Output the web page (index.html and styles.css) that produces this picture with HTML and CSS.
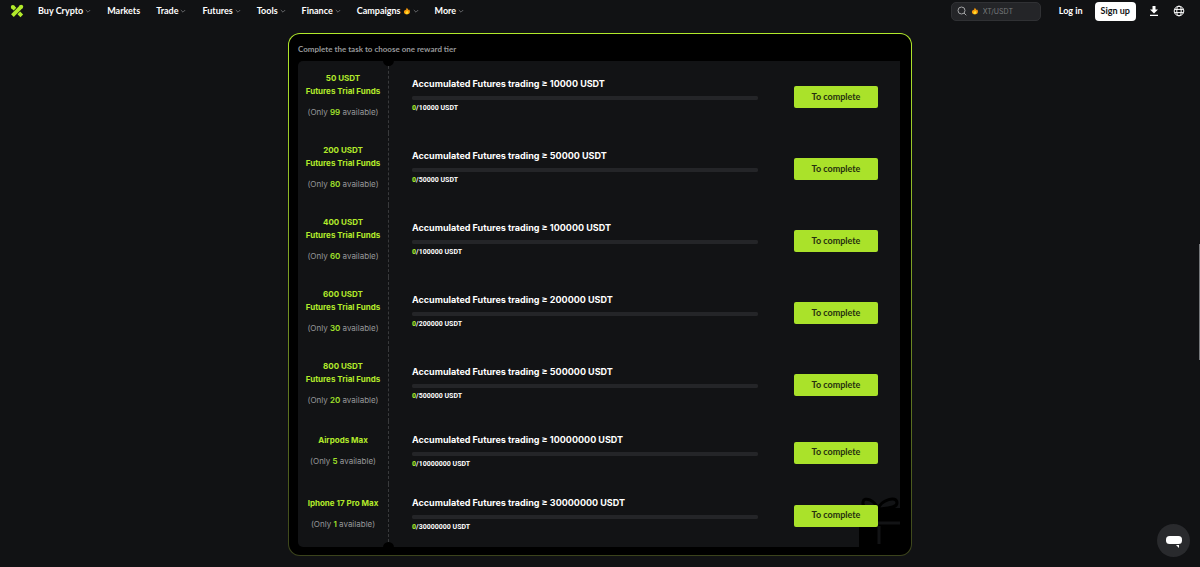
FILE: index.html
```
<!DOCTYPE html>
<html lang="en">
<head>
  <meta charset="UTF-8">
  <meta name="viewport" content="width=device-width, initial-scale=1.0">
  <title>Futures reward tiers</title>
  <link rel="stylesheet" href="styles.css">
</head>
<body>
  <svg width="0" height="0" class="sprite" aria-hidden="true">
    <symbol id="chevron" viewBox="0 0 6 6">
      <path d="M.8 2L3 4.200 5.200 2" fill="none" stroke="currentColor" stroke-width="0.8"/>
    </symbol>
    <symbol id="flame" viewBox="0 0 8 8">
      <path d="M3.6.8C5 1.6 5 2.8 5.4 3.2c.4 0 .5-.5.4-.9C7 3.3 7.2 5 6.6 6.1 6 7.1 5 7.5 4 7.5 2.200 7.500.9 6.500.9 5c0-1.200.8-1.600 1.500-1.900C3.200 2.600 3.600 1.900 3.600.8z" fill="#f79a0b"/>
      <path d="M4 3.800c.9.800 1.500 1.400 1.300 2.300-.2.700-.7 1-1.400 1-.9 0-1.500-.6-1.400-1.400C2.600 4.900 3.700 4.800 4 3.800z" fill="#ffe02e"/>
    </symbol>
  </svg>

  <header class="header">
    <a class="logo" href="#" aria-label="Home">
      <svg width="14" height="14" viewBox="0 0 14 14">
        <g stroke="#b2ea2b" fill="none">
          <path d="M2.400 11.600L11.300 2.700" stroke-width="3.800"/>
          <path d="M2.600 2.800l2.400 2.400M8.800 8.800l3 3" stroke-width="3.800"/>
        </g>
        <circle cx="2.800" cy="3" r="2" fill="#b2ea2b"/>
        <circle cx="11.200" cy="2.800" r="2" fill="#b2ea2b"/>
      </svg>
    </a>
    <nav class="nav">
      <button type="button">Buy Crypto<svg class="chevron"><use href="#chevron"/></svg></button>
      <a href="#">Markets</a>
      <button type="button">Trade<svg class="chevron"><use href="#chevron"/></svg></button>
      <button type="button">Futures<svg class="chevron"><use href="#chevron"/></svg></button>
      <button type="button">Tools<svg class="chevron"><use href="#chevron"/></svg></button>
      <button type="button">Finance<svg class="chevron"><use href="#chevron"/></svg></button>
      <button type="button">Campaigns<svg class="flame"><use href="#flame"/></svg><svg class="chevron"><use href="#chevron"/></svg></button>
      <button type="button">More<svg class="chevron"><use href="#chevron"/></svg></button>
    </nav>
    <div class="actions">
      <label class="search">
        <svg width="10" height="10" viewBox="0 0 10 10" fill="none" stroke="#a3a4a6">
          <circle cx="4.500" cy="4.500" r="3.500"/>
          <path d="M7 7l2.300 2.300"/>
        </svg>
        <svg class="flame"><use href="#flame"/></svg>
        <input type="text" placeholder="XT/USDT" aria-label="Search">
      </label>
      <a class="login" href="#">Log in</a>
      <button type="button" class="signup">Sign up</button>
      <button type="button" class="icon-btn" aria-label="Download">
        <svg width="10" height="12" viewBox="0 0 10 12" fill="#fff">
          <path d="M3.500 1h3v3.500H9L5 8.500 1 4.500h2.500zM1 9.800h8V11H1z"/>
        </svg>
      </button>
      <button type="button" class="icon-btn" aria-label="Language">
        <svg width="12" height="12" viewBox="0 0 12 12" fill="none" stroke="#fff">
          <circle cx="6" cy="6" r="4.800"/>
          <ellipse cx="6" cy="6" rx="2.200" ry="4.800"/>
          <path d="M1.500 4.400h9M1.500 7.600h9"/>
        </svg>
      </button>
    </div>
  </header>

  <main class="panel">
    <h1>Complete the task to choose one reward tier</h1>
    <div class="ticket">
      <svg class="gift" width="42" height="50" viewBox="0 0 42 50" aria-hidden="true">
        <path d="M1 25h41v25H1zM4 11h38v15H4z"/>
        <path d="M20 12C17 3 6-1 5 5s5 6 15 7c3-9 19-14 19-6 0 5-9 5-19 6z" fill="none" stroke="#000" stroke-width="3"/>
        <path d="M19 26h23M21 29v18" fill="none" stroke="#121315" stroke-width="3"/>
      </svg>
      <ul class="tiers" id="tiers"></ul>
    </div>
  </main>

  <button type="button" class="chat" aria-label="Chat">
    <svg width="18" height="18" viewBox="0 0 18 18" fill="#fff">
      <rect x="1" y="4" width="16" height="8" rx="3.500"/>
      <path d="M11 13h3v3z"/>
    </svg>
  </button>
  <div class="scroll-thumb"></div>

  <script>
    const tiers = [
      { reward: '50 USDT<br>Futures Trial Funds', left: 99, goal: 10000 },
      { reward: '200 USDT<br>Futures Trial Funds', left: 80, goal: 50000 },
      { reward: '400 USDT<br>Futures Trial Funds', left: 60, goal: 100000 },
      { reward: '600 USDT<br>Futures Trial Funds', left: 30, goal: 200000 },
      { reward: '800 USDT<br>Futures Trial Funds', left: 20, goal: 500000 },
      { reward: 'Airpods Max', left: 5, goal: 10000000 },
      { reward: 'Iphone 17 Pro Max', left: 1, goal: 30000000 },
    ];

    document.getElementById('tiers').innerHTML = tiers.map((t, i) => `
      <li class="tier">
        <div class="reward">
          <h2>${t.reward}</h2>
          <p>(Only <b>${t.left}</b> available)</p>
        </div>
        <div class="task">
          <label for="task${i}">Accumulated Futures trading ≥ ${t.goal} USDT</label>
          <progress id="task${i}" value="0" max="${t.goal}"></progress>
          <p><b>0</b>/${t.goal} USDT</p>
        </div>
        <button type="button" class="complete">To complete</button>
      </li>`).join('');
  </script>
</body>
</html>
```
FILE: styles.css
```
* {
  box-sizing: border-box;
}

body {
  margin: 0;
  background: #111214;
  color: #fff;
  font-family: Inter, "Liberation Sans", sans-serif;
  font-size: 9px;
  overflow: hidden;
}

h1, h2, p, ul {
  margin: 0;
  padding: 0;
}

button {
  padding: 0;
  border: 0;
  background: none;
  color: inherit;
  font: inherit;
  cursor: pointer;
}

a {
  color: inherit;
  text-decoration: none;
}

svg {
  display: block;
  flex: none;
}

.sprite {
  position: absolute;
}

.chevron {
  width: 6px;
  height: 6px;
  color: #77797c;
}

.flame {
  width: 8px;
  height: 8px;
}

/* top bar */
.header {
  display: flex;
  align-items: center;
  height: 22px;
  padding: 0 15px 0 10px;
  font-family: Lato, sans-serif;
  font-weight: 700;
  line-height: 10px;
}

.nav {
  display: flex;
  gap: 16px;
  margin-left: 14px;
}

.nav button {
  display: flex;
  align-items: center;
  gap: 2px;
}

.actions {
  display: flex;
  align-items: center;
  margin-left: auto;
}

.search {
  display: flex;
  align-items: center;
  gap: 4px;
  width: 90px;
  height: 19px;
  padding: 0 5px;
  border: 1px solid #303134;
  border-radius: 5px;
  background: #242528;
}

.search input {
  flex: 1;
  min-width: 0;
  padding: 0;
  border: 0;
  outline: 0;
  background: none;
  color: #fff;
  font: 7px Inter, sans-serif;
}

.search input::placeholder {
  color: #77797c;
}

.login {
  margin-left: 18px;
}

.signup {
  height: 19px;
  margin: 0 13px 0 12px;
  padding: 0 6px;
  border-radius: 4px;
  background: #fff;
  color: #111214;
}

.icon-btn + .icon-btn {
  margin-left: 14px;
}

/* rewards */
.panel {
  width: 52%;
  margin: 11px auto 0;
  padding: 10px 11px 8px 9px;
  border: 1px solid transparent;
  border-radius: 12px;
  background:
    linear-gradient(#000, #000) padding-box,
    linear-gradient(#b2ea2b, #3b431c) border-box;
}

.panel h1 {
  color: #97989a;
  font-family: Lato, sans-serif;
  font-size: 8px;
  font-weight: 700;
  line-height: 10px;
}

.ticket {
  position: relative;
  margin-top: 7px;
  border-radius: 5px 0 0 5px;
  background: #121315;
}

.ticket::before,
.ticket::after {
  content: "";
  position: absolute;
  left: 85px;
  z-index: 1;
  width: 11px;
  height: 11px;
  border-radius: 50%;
  background: #000;
}

.ticket::before {
  top: -6px;
}

.ticket::after {
  bottom: -6px;
}

.gift {
  position: absolute;
  right: 0;
  bottom: 0;
}

.tiers {
  position: relative;
  list-style: none;
}

.tier {
  display: flex;
  align-items: center;
  min-height: 63px;
  padding-right: 22px;
}

.reward {
  display: flex;
  flex-direction: column;
  align-self: stretch;
  justify-content: center;
  gap: 8px;
  width: 91px;
  padding: 11px 0 14px;
  border-right: 1px dashed #393a3c;
  line-height: 13px;
  text-align: center;
}

.reward h2 {
  color: #b2ea2b;
  font-size: 8px;
  font-weight: 700;
  line-height: 13px;
}

.reward p {
  color: #97989a;
  font-size: 8px;
}

.reward b {
  color: #a1e22b;
  font-weight: 600;
}

.task {
  flex: 1;
  margin: 0 36px 3px 23px;
}

.task label {
  display: block;
  font-size: 9px;
  font-weight: 700;
  line-height: 12px;
}

.task progress {
  display: block;
  width: 100%;
  height: 4px;
  margin: 6px 0 3px;
  border: 0;
  border-radius: 2px;
  appearance: none;
  background: #242528;
}

.task progress::-webkit-progress-bar {
  border-radius: 2px;
  background: #242528;
}

.task progress::-webkit-progress-value {
  background: #b2ea2b;
}

.task p {
  font-family: Roboto, sans-serif;
  font-size: 7px;
  font-weight: 700;
  line-height: 10px;
}

.task p b {
  color: #a1e22b;
}

.complete {
  width: 84px;
  height: 22px;
  padding-bottom: 2px;
  border-radius: 2px;
  background: #aae22a;
  color: #26300f;
  font-family: Lato, sans-serif;
  font-weight: 700;
}

/* floating chat */
.chat {
  position: fixed;
  right: 10px;
  bottom: 10px;
  display: grid;
  place-items: center;
  width: 33px;
  height: 33px;
  border-radius: 50%;
  background: #292a2d;
}

.scroll-thumb {
  position: fixed;
  top: 43%;
  right: 0;
  width: 1px;
  height: 116px;
  background: #77797c;
}
```
